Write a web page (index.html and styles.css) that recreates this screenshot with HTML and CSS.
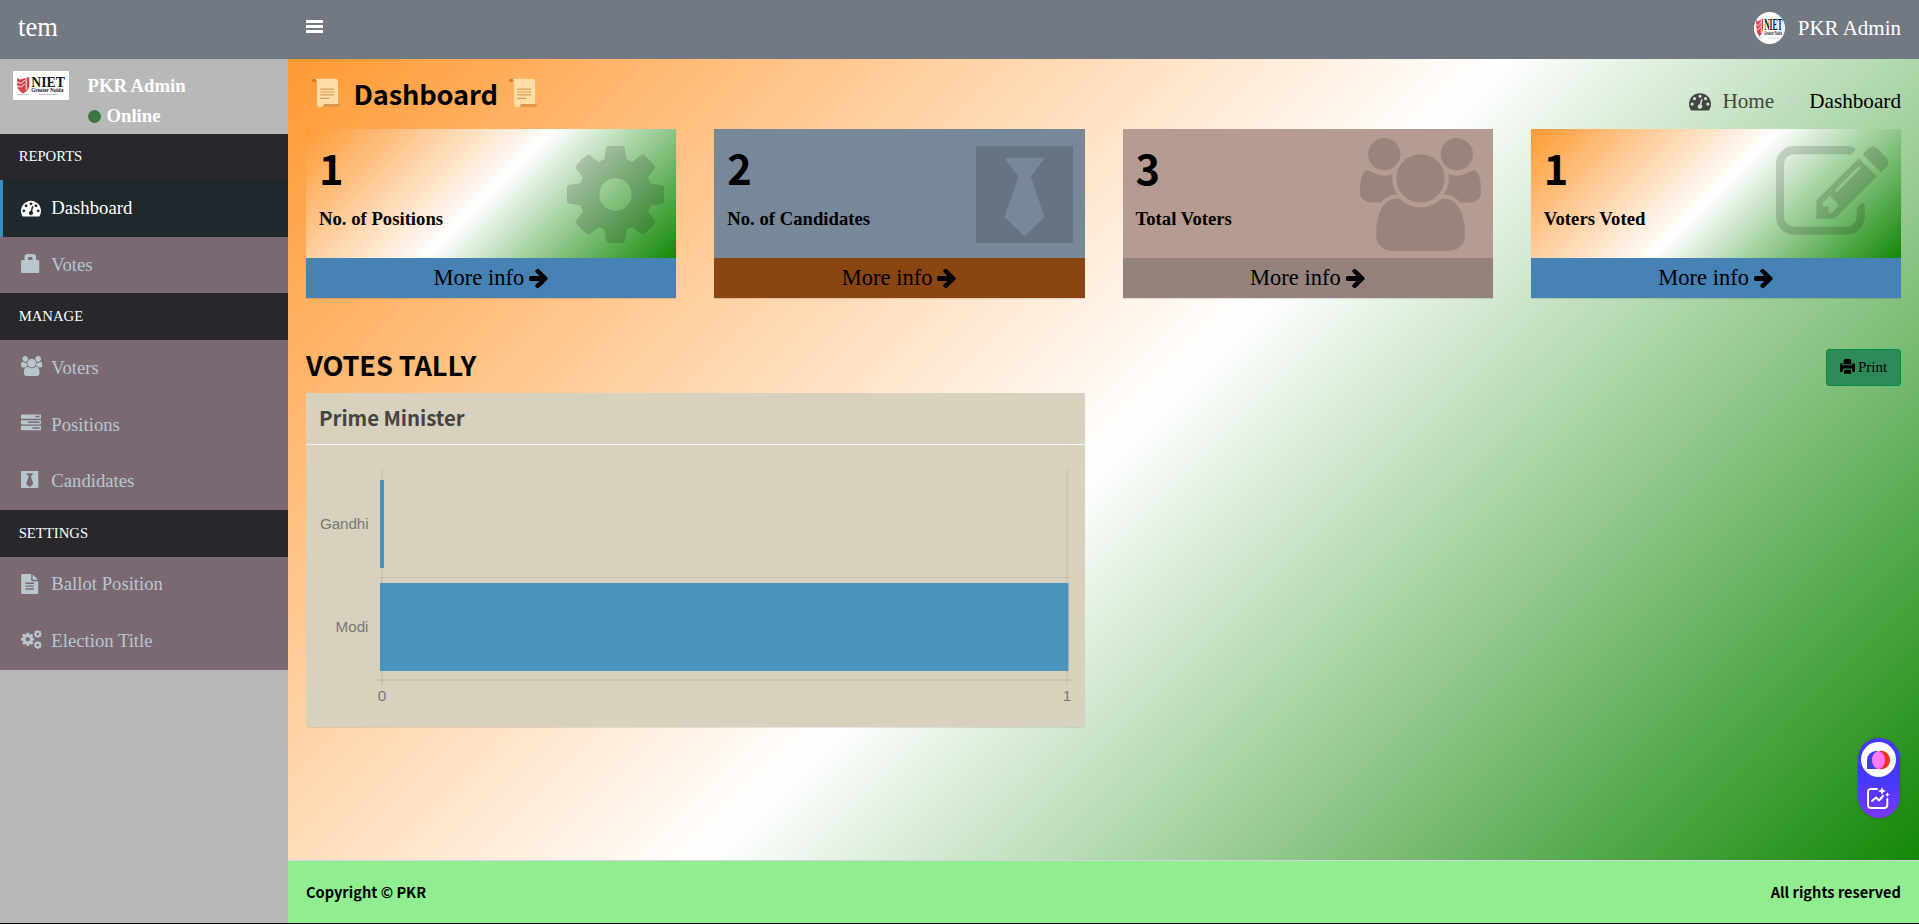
FILE: index.html
```html
<!DOCTYPE html>
<html lang="en">
<head>
<meta charset="utf-8">
<title>Dashboard</title>
<link rel="stylesheet" href="styles.css">
</head>
<body>
<svg class="defs" aria-hidden="true">
  <symbol id="i-dash" viewBox="0 0 1792 1792"><path d="M384 1152q0-53-37.5-90.5t-90.5-37.5-90.5 37.5-37.5 90.5 37.5 90.5 90.5 37.5 90.5-37.5 37.5-90.5zm192-448q0-53-37.5-90.5t-90.5-37.5-90.5 37.5-37.5 90.5 37.5 90.5 90.5 37.5 90.5-37.5 37.5-90.5zm428 481l101-382q6-26-7.5-48.5t-38.5-29.5-48 6.5-30 39.5l-101 382q-60 5-107 43.5t-63 98.5q-20 77 20 146t117 89 146-20 89-117q16-60-6-117t-72-91zm660-33q0-53-37.5-90.5t-90.5-37.5-90.5 37.5-37.5 90.5 37.5 90.5 90.5 37.5 90.5-37.5 37.5-90.5zm-640-640q0-53-37.5-90.5t-90.5-37.5-90.5 37.5-37.5 90.5 37.5 90.5 90.5 37.5 90.5-37.5 37.5-90.5zm448 192q0-53-37.5-90.5t-90.5-37.5-90.5 37.5-37.5 90.5 37.5 90.5 90.5 37.5 90.5-37.5 37.5-90.5zm320 448q0 261-141 483-19 29-54 29h-1402q-35 0-54-29-141-221-141-483 0-182 71-348t191-286 286-191 348-71 348 71 286 191 191 286 71 348z"/></symbol>
  <symbol id="i-users" viewBox="0 0 1920 1792"><path d="M593 896q-162 5-265 128h-134q-82 0-138-40.5t-56-118.5q0-353 124-353 6 0 43.5 21t97.5 42.5 119 21.5q67 0 133-23-5 37-5 66 0 139 81 256zm1071 637q0 120-73 189.5t-194 69.5h-874q-121 0-194-69.5t-73-189.5q0-53 3.5-103.5t14-109 26.5-108.5 43-97.5 62-81 85.5-53.5 111.5-20q10 0 43 21.5t73 48 107 48 135 21.5 135-21.5 107-48 73-48 43-21.5q61 0 111.5 20t85.5 53.5 62 81 43 97.5 26.5 108.5 14 109 3.5 103.5zm-1024-1277q0 106-75 181t-181 75-181-75-75-181 75-181 181-75 181 75 75 181zm704 384q0 159-112.5 271.5t-271.5 112.5-271.5-112.5-112.5-271.5 112.5-271.5 271.5-112.5 271.5 112.5 112.5 271.5zm576 225q0 78-56 118.5t-138 40.5h-134q-103-123-265-128 81-117 81-256 0-29-5-66 66 23 133 23 59 0 119-21.5t97.5-42.5 43.5-21q124 0 124 353zm-128-609q0 106-75 181t-181 75-181-75-75-181 75-181 181-75 181 75 75 181z"/></symbol>
  <symbol id="i-cog" viewBox="128 128 1536 1536"><path d="M1152 896q0-106-75-181t-181-75-181 75-75 181 75 181 181 75 181-75 75-181zm512-109v222q0 12-8 23t-20 13l-185 28q-19 54-39 91 35 50 107 138 10 12 10 25t-9 23q-27 37-99 108t-94 71q-12 0-26-9l-138-108q-44 23-91 38-16 136-29 186-7 28-36 28h-222q-14 0-24.5-8.5t-11.5-21.5l-28-184q-49-16-90-37l-141 107q-10 9-25 9-14 0-25-11-126-114-165-168-7-10-7-23 0-12 8-23 15-21 51-66.5t54-70.5q-27-50-41-99l-183-27q-13-2-21-12.5t-8-23.5v-222q0-12 8-23t19-13l186-28q14-46 39-92-40-57-107-138-10-12-10-24 0-10 9-23 26-36 98.500-107.500t94.500-71.500q13 0 26 10l138 107q44-23 91-38 16-136 29-186 7-28 36-28h222q14 0 24.500 8.500t11.500 21.500l28 184q49 16 90 37l142-107q9-9 24-9 13 0 25 10 129 119 165 170 7 8 7 22 0 12-8 23-15 21-51 66.500t-54 70.500q26 50 41 98l183 28q13 2 21 12.500t8 23.500z"/></symbol>
  <symbol id="i-tie" viewBox="0 0 290 290"><path fill-rule="evenodd" d="M0 0H290V290H0zM85 36L127 92 85 212 145 270 205 212 164 92 205 36z"/></symbol>
  <symbol id="i-edit" viewBox="0 0 1792 1792"><path d="M888 1184l116-116-152-152-116 116v56h96v96h56zm440-720q-16-16-33 1l-350 350q-17 17-1 33t33-1l350-350q17-17 1-33zm80 594v190q0 119-84.500 203.500t-203.500 84.500h-832q-119 0-203.500-84.500t-84.500-203.500v-832q0-119 84.500-203.500t203.500-84.500h832q63 0 117 25 15 7 18 23 3 17-9 29l-49 49q-14 14-32 8-23-6-45-6h-832q-66 0-113 47t-47 113v832q0 66 47 113t113 47h832q66 0 113-47t47-113v-126q0-13 9-22l64-64q15-15 35-7t20 29zm-96-738l288 288-672 672h-288v-288zm444 132l-92 92-288-288 92-92q28-28 68-28t68 28l152 152q28 28 28 68t-28 68z"/></symbol>
  <symbol id="i-tasks" viewBox="0 0 1792 1792"><path d="M1024 1408h640v-128h-640v128zm-384-512h1024v-128h-1024v128zm640-512h384v-128h-384v128zm512 832v256q0 26-19 45t-45 19h-1664q-26 0-45-19t-19-45v-256q0-26 19-45t45-19h1664q26 0 45 19t19 45zm0-512v256q0 26-19 45t-45 19h-1664q-26 0-45-19t-19-45v-256q0-26 19-45t45-19h1664q26 0 45 19t19 45zm0-512v256q0 26-19 45t-45 19h-1664q-26 0-45-19t-19-45v-256q0-26 19-45t45-19h1664q26 0 45 19t19 45z"/></symbol>
  <symbol id="i-file" viewBox="128 0 1536 1792"><path d="M1596 476q14 14 28 36h-472v-472q22 14 36 28zm-476 164h544v1056q0 40-28 68t-68 28h-1344q-40 0-68-28t-28-68v-1600q0-40 28-68t68-28h800v544q0 40 28 68t68 28zm160 736v-64q0-14-9-23t-23-9h-704q-14 0-23 9t-9 23v64q0 14 9 23t23 9h704q14 0 23-9t9-23zm0-256v-64q0-14-9-23t-23-9h-704q-14 0-23 9t-9 23v64q0 14 9 23t23 9h704q14 0 23-9t9-23zm0-256v-64q0-14-9-23t-23-9h-704q-14 0-23 9t-9 23v64q0 14 9 23t23 9h704q14 0 23-9t9-23z"/></symbol>
  <symbol id="i-arrow" viewBox="128 128 1536 1664"><path d="M1600 960q0 54-37 91l-651 651q-39 37-91 37-51 0-90-37l-75-75q-38-38-38-91t38-91l293-293h-704q-52 0-84.500-37.500t-32.500-90.500v-128q0-53 32.500-90.500t84.500-37.500h704l-293-294q-38-36-38-90t38-90l75-75q38-38 90-38 53 0 91 38l651 651q37 35 37 90z"/></symbol>
  <symbol id="i-lock" viewBox="0 0 18.500 19"><path fill-rule="evenodd" d="M1.500 6H3.500V3Q3.500 0 6.500 0H12Q15 0 15 3V6H17Q18.500 6 18.500 7.500V17.500Q18.500 19 17 19H1.500Q0 19 0 17.500V7.500Q0 6 1.500 6zM7 6H11.500V4Q11.500 3 10.500 3H8Q7 3 7 4z"/></symbol>
  <symbol id="i-print" viewBox="0 0 15 15"><path d="M5 0H10L11.300 1.300V5.200H3.700V1.300zM0 5.500Q0 4.500 1 4.500H2.600L2.900 6.300H12.100L12.400 4.500H14Q15 4.500 15 5.500V13H12.600L11.600 9.500H3.400L2.400 13H0zM4.400 10.800H10.600L11.300 14.800H3.700z"/></symbol>
  <symbol id="i-scroll" viewBox="0 0 30 30"><path fill="#e0964a" d="M12 26H29Q29.500 29 25 29.500H8z"/><path fill="#c87a2f" d="M0 2Q0 .3 3 .3H7V3H5.500Q4.500 1.500 3.500 3.300Q0 4 0 2z"/><path fill="#ffdda6" d="M3 .3H23.500Q27 .3 27 3.500V26.500H13Q11 26.500 12 28Q11 29.800 8 29.800Q5.200 29.500 5.200 26V5Q5.200 1 3 .3z"/><path stroke="#dc9c58" stroke-width="1.200" d="M8.500 11H23M8.500 14H23M8.500 17H23M8.500 20.500H18"/></symbol>
  <symbol id="i-logo" viewBox="0 0 56 29" preserveAspectRatio="none">
    <path fill="#d8434a" d="M4 7L7 8.500 16.300 6V15Q15.500 19.500 10 22.500Q5 19.500 4.200 15z"/>
    <path stroke="#fff" stroke-width=".9" fill="none" d="M4 11L8 12.500 12 9M4 15L8 16 12 13M13.200 7V19"/>
    <text x="18.300" y="16.300" class="logo-name" textLength="33.500" lengthAdjust="spacingAndGlyphs">NIET</text>
    <text x="18.300" y="21" class="logo-sub" textLength="32" lengthAdjust="spacingAndGlyphs">Greater Noida</text>
    <path stroke="#999" stroke-width=".6" d="M4.500 23.600H16M26 23.600H44"/>
  </symbol>
</svg>
<div class="wrapper">
  <header class="topbar">
    <div class="brand">tem</div>
    <div class="toggle"><span></span><span></span><span></span></div>
    <div class="account">
      <svg class="avatar"><use href="#i-logo"/></svg>
      <span>PKR Admin</span>
    </div>
  </header>
  <div class="body">
    <aside class="sidebar">
      <div class="user">
        <svg class="logo"><use href="#i-logo"/></svg>
        <div class="who"><div>PKR Admin</div><div class="status"><span class="dot"></span>Online</div></div>
      </div>
      <div class="heading">REPORTS</div>
      <a class="item active"><span class="ic"><svg class="w20"><use href="#i-dash"/></svg></span>Dashboard</a>
      <a class="item"><span class="ic lift"><svg class="lock"><use href="#i-lock"/></svg></span>Votes</a>
      <div class="heading">MANAGE</div>
      <a class="item"><span class="ic lift"><svg class="users"><use href="#i-users"/></svg></span>Voters</a>
      <a class="item"><span class="ic lift"><svg class="w20"><use href="#i-tasks"/></svg></span>Positions</a>
      <a class="item"><span class="ic lift"><svg class="tie"><use href="#i-tie"/></svg></span>Candidates</a>
      <div class="heading">SETTINGS</div>
      <a class="item"><span class="ic"><svg class="file"><use href="#i-file"/></svg></span>Ballot Position</a>
      <a class="item"><span class="ic lift"><svg class="cogs" viewBox="0 0 21 19"><use href="#i-cog" x="0" y="2.500" width="13.500" height="13.500"/><use href="#i-cog" x="12.800" y="0" width="8" height="8"/><use href="#i-cog" x="12.800" y="11" width="8" height="8"/></svg></span>Election Title</a>
    </aside>
    <div class="page">
      <main class="content">
        <div class="title-row">
          <h1><svg class="scroll"><use href="#i-scroll"/></svg><span class="title">Dashboard</span><svg class="scroll"><use href="#i-scroll"/></svg></h1>
          <nav class="crumbs"><svg class="crumb-icon"><use href="#i-dash"/></svg><span class="home">Home</span><span class="sep">&gt;</span><span>Dashboard</span></nav>
        </div>
        <section class="cards">
          <div class="card flag"><div class="inner"><div><h3>1</h3><p>No. of Positions</p></div><svg class="big cog"><use href="#i-cog"/></svg></div><a>More info <svg><use href="#i-arrow"/></svg></a></div>
          <div class="card slate"><div class="inner"><div><h3>2</h3><p>No. of Candidates</p></div><svg class="big cog"><use href="#i-tie"/></svg></div><a>More info <svg><use href="#i-arrow"/></svg></a></div>
          <div class="card rose"><div class="inner"><div><h3>3</h3><p>Total Voters</p></div><svg class="big group"><use href="#i-users"/></svg></div><a>More info <svg><use href="#i-arrow"/></svg></a></div>
          <div class="card flag"><div class="inner"><div><h3>1</h3><p>Voters Voted</p></div><svg class="big pen"><use href="#i-edit"/></svg></div><a>More info <svg><use href="#i-arrow"/></svg></a></div>
        </section>
        <div class="tally"><h2>VOTES TALLY</h2><button class="print"><svg><use href="#i-print"/></svg>Print</button></div>
        <section class="box">
          <h4>Prime Minister</h4>
          <svg class="chart" viewBox="0 0 779 282">
            <g fill="#000" fill-opacity=".06">
              <rect x="75" y="24" width="2" height="217"/><rect x="760" y="24" width="2" height="217" fill-opacity=".04"/>
              <rect x="69" y="132" width="698" height="1"/><rect x="69" y="234" width="698" height="2"/>
            </g>
            <g fill="#3c8dbc" fill-opacity=".9">
              <rect x="74" y="35" width="4" height="88"/><rect x="74" y="138" width="688.500" height="88"/>
            </g>
            <g class="ticks">
              <text x="62.500" y="84" text-anchor="end" textLength="48.500">Gandhi</text><text x="62.500" y="187" text-anchor="end">Modi</text>
              <text x="76" y="256" text-anchor="middle">0</text><text x="761" y="256" text-anchor="middle">1</text>
            </g>
          </svg>
        </section>
      </main>
      <footer class="footer"><span>Copyright © PKR</span><span>All rights reserved</span></footer>
    </div>
  </div>
</div>
<div class="widget">
  <svg viewBox="0 0 42 80" width="42" height="80">
    <circle cx="20.500" cy="21.500" r="17.500" fill="#fff"/>
    <path fill="#3f3be8" d="M9 31V22A9 9 0 0 1 18 13H20V31z"/>
    <path fill="#ff2b1c" d="M21 13A9 9 0 0 1 32 22A9 9 0 0 1 21 31z"/>
    <ellipse cx="20.500" cy="22" rx="6.500" ry="8.800" fill="#ff78f5"/>
    <g fill="none" stroke="#fff" stroke-width="1.900" stroke-linecap="round" stroke-linejoin="round"><path d="M19 51H13Q10 51 10 54V67Q10 70 13 70H26Q29.300 70 29.300 67V61"/><path d="M14 63L18 59.500 21 62.500 25 58"/></g>
    <path fill="#fff" d="M24 49L25.200 51.800 28 53 25.200 54.200 24 57 22.800 54.200 20 53 22.800 51.800zM29.500 54L30.100 56 32 56.700 30.100 57.400 29.500 59.500 28.800 57.400 27 56.700 28.800 56z"/>
  </svg>
</div>
</body>
</html>
```

FILE: styles.css
```css
* { box-sizing: border-box; }
body { margin: 0; font-family: "Liberation Serif", serif; font-size: 18.7px; color: #000; background: #000; overflow: hidden; }
svg { display: block; fill: currentColor; }
h1, h2, h3, h4, p { margin: 0; }
.defs { position: absolute; width: 0; height: 0; }
.wrapper { display: flex; flex-direction: column; height: 923px; }

.topbar { display: flex; align-items: center; height: 59px; flex: none; background: #727982; color: #fff; padding-right: 18px; }
.brand { width: 306px; padding: 0 0 4px 18px; font-size: 26.6px; }
.toggle { display: flex; flex-direction: column; gap: 2px; width: 16.500px; padding-bottom: 6px; }
.toggle span { height: 3px; background: #fff; }
.account { display: flex; align-items: center; gap: 13px; margin-left: auto; padding-bottom: 4px; font-size: 21px; line-height: 24px; }
.avatar { width: 31px; height: 32px; margin-top: 1px; border-radius: 50%; background: #fff; color: #111; }
.logo-name { font: bold 15.500px "Liberation Serif", serif; }
.logo-sub { font: bold 5.600px "Liberation Serif", serif; }

.body { display: flex; flex: 1; min-height: 0; }
.sidebar { width: 288px; flex: none; background: #b8b8b8; }
.user { display: flex; height: 74.600px; padding: 12px 13px; color: #fff; font-weight: bold; }
.logo { width: 56px; height: 29px; flex: none; background: #fff; color: #111; }
.who { padding: 4px 0 0 18.500px; line-height: 22px; }
.status { display: flex; align-items: center; gap: 6px; padding-top: 8px; }
.dot { width: 13px; height: 13px; margin-top: 1px; border-radius: 50%; background: #3c763d; }
.heading { display: flex; align-items: center; height: 46.700px; padding: 0 18.700px; background: #28272c; color: #fff; font-size: 14.700px; }
.item { display: flex; align-items: center; height: 56.600px; padding-left: 21.300px; background: #7a6973; color: #b8c7ce; line-height: 22px; padding-bottom: 1px; }
.item.active { background: #1f282c; color: #fff; border-left: 3px solid #3c8dbc; padding-left: 18.300px; }
.ic { width: 30px; }
.lift { padding-bottom: 3px; }
.w20 { width: 20px; height: 20px; }
.lock { width: 18.500px; height: 19px; }
.users { width: 21.400px; height: 20px; }
.tie { width: 17.500px; height: 17.500px; }
.file { width: 17.500px; height: 20px; }
.cogs { width: 21px; height: 19px; }

.page { display: flex; flex-direction: column; flex: 1; min-width: 0; }
.content { flex: 1; padding: 0 18px; background: linear-gradient(135deg, #ff9933 0%, #fff 50%, #138808 100%); }
.title-row { display: flex; justify-content: space-between; height: 70px; }
h1, h2, h3, h4, .footer { font-family: "Noto Sans CJK SC", "Noto Sans", sans-serif; font-weight: bold; }
h1 { display: flex; align-items: center; padding: 0 0 3px 6px; font-size: 27.200px; letter-spacing: -.15px; line-height: 40px; }
.scroll { width: 29px; height: 30px; }
.title { width: 168px; padding-left: 12.500px; }
.crumbs { display: flex; align-items: center; padding-top: 15px; font-size: 21.200px; }
.crumb-icon { width: 22px; height: 22px; margin: 0 11.500px 1px 0; color: #444; }
.home { color: #444; }
.sep { margin: 0 11.500px; color: #ccc; }

.cards { display: grid; grid-template-columns: repeat(4, 1fr); gap: 38px; }
.card { box-shadow: 0 1px 1px rgba(0, 0, 0, .1); }
.inner { display: flex; justify-content: space-between; height: 129px; padding: 0 12px 0 13px; }
.flag .inner { background: linear-gradient(135deg, #ff9933 0%, #fff 50%, #138808 100%); }
.slate .inner { background: #778899; }
.rose .inner { background: #b59b91; }
h3 { padding-top: 9px; font-size: 41.600px; line-height: 58px; }
.card p { padding-top: 12px; font-weight: bold; line-height: 22px; }
.big { color: rgba(0, 0, 0, .15); }
.cog { width: 97px; height: 97px; margin-top: 17px; }
.group { width: 121px; height: 113px; margin-top: 9px; }
.pen { width: 113px; height: 113px; margin-top: 9px; }
.card a { display: flex; justify-content: center; align-items: center; height: 40px; gap: 5px; background: #4682b4; font-size: 22.500px; }
.card a svg { width: 19.500px; height: 21px; }
.slate a { background: #8b4513; }
.rose a { background: #95827c; }

.tally { display: flex; justify-content: space-between; height: 95px; padding-top: 51px; }
h2 { margin-top: -2px; font-size: 27.200px; letter-spacing: -.1px; line-height: 34px; }
.print { display: flex; align-items: center; gap: 3px; height: 37px; width: 75px; padding: 0 0 0 13px; border: 1px solid #008d4c; border-radius: 3px; background: #2e8b57; color: #000; font: 15px "Liberation Serif", serif; }
.print svg { width: 15px; height: 15px; margin-bottom: 3px; }

.box { width: 779px; height: 334px; background: #d8d1bd; border-radius: 0 0 3px 3px; box-shadow: 0 1px 1px rgba(0, 0, 0, .1); }
h4 { height: 52px; padding: 9px 13px 0; border-bottom: 1px solid #f4f4f4; color: #444; font-size: 20.400px; letter-spacing: -.05px; line-height: 30px; }
.chart { width: 779px; height: 282px; }
.ticks { font: 15.200px "Liberation Sans", sans-serif; fill: #777; }

.footer { display: flex; justify-content: space-between; align-items: center; height: 63px; flex: none; padding: 0 18px 2px; border-top: 1px solid #d2d6de; background: #90ee90; font-size: 14.600px; }
.widget { position: absolute; left: 1858px; top: 738px; width: 42px; height: 80px; border-radius: 21px; background: linear-gradient(#4338ff 50%, #7a38f5); box-shadow: 0 0 2px rgba(0, 0, 0, .4); }
```
